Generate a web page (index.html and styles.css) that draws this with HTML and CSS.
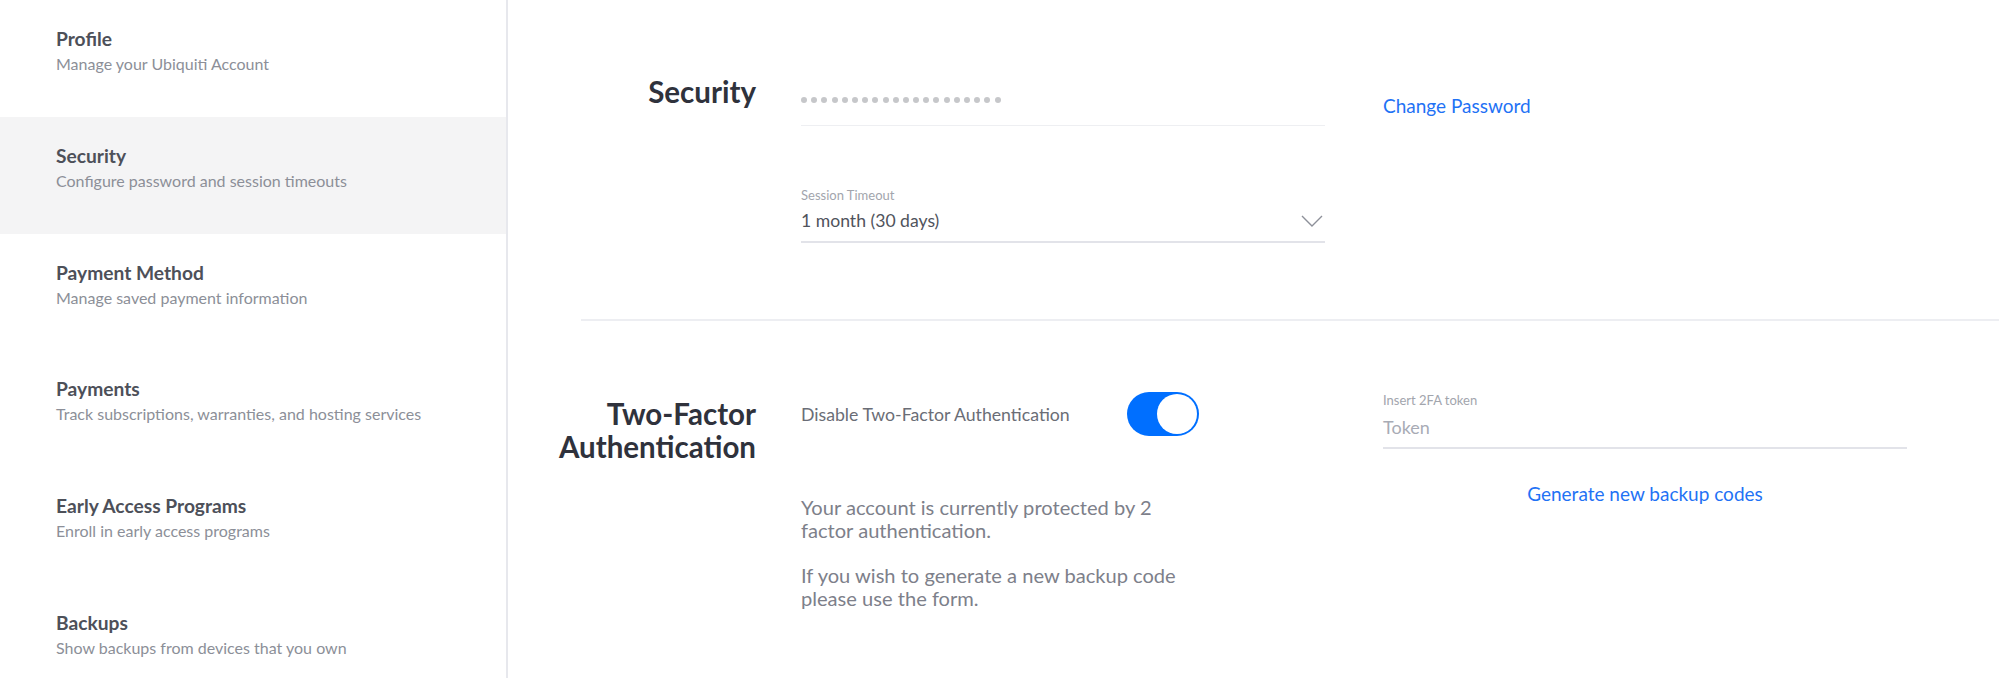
FILE: index.html
```html
<!DOCTYPE html>
<html lang="en">
<head>
<meta charset="utf-8">
<title>Security</title>
<link rel="stylesheet" href="styles.css">
</head>
<body>
<div class="page">
  <nav class="sidebar">
    <a class="nav-item">
      <div class="nav-title">Profile</div>
      <div class="nav-sub">Manage your Ubiquiti Account</div>
    </a>
    <a class="nav-item active">
      <div class="nav-title">Security</div>
      <div class="nav-sub">Configure password and session timeouts</div>
    </a>
    <a class="nav-item">
      <div class="nav-title">Payment Method</div>
      <div class="nav-sub">Manage saved payment information</div>
    </a>
    <a class="nav-item">
      <div class="nav-title">Payments</div>
      <div class="nav-sub">Track subscriptions, warranties, and hosting services</div>
    </a>
    <a class="nav-item">
      <div class="nav-title">Early Access Programs</div>
      <div class="nav-sub">Enroll in early access programs</div>
    </a>
    <a class="nav-item">
      <div class="nav-title">Backups</div>
      <div class="nav-sub">Show backups from devices that you own</div>
    </a>
  </nav>

  <main class="main">
    <section class="section section-security">
      <h2 class="section-title">Security</h2>
      <div class="section-body">
        <div class="password-field">
          <span class="dots">
            <i></i><i></i><i></i><i></i><i></i><i></i><i></i><i></i><i></i><i></i>
            <i></i><i></i><i></i><i></i><i></i><i></i><i></i><i></i><i></i><i></i>
          </span>
        </div>
        <div class="select-field">
          <div class="field-label">Session Timeout</div>
          <div class="select">
            <span class="select-value">1 month (30 days)</span>
            <svg class="chevron" width="22" height="12" viewBox="0 0 22 12"><path d="M1 1 L11 11 L21 1" fill="none" stroke="#8d9099" stroke-width="1.4"/></svg>
          </div>
        </div>
      </div>
      <div class="section-aside">
        <a class="link change-pw">Change Password</a>
      </div>
    </section>

    <div class="divider"></div>

    <section class="section section-tfa">
      <h2 class="section-title tfa-title">Two-Factor Authentication</h2>
      <div class="section-body tfa-body">
        <div class="toggle-row">
          <span class="toggle-label">Disable Two-Factor Authentication</span>
          <span class="toggle"><span class="knob"></span></span>
        </div>
        <p class="info first">Your account is currently protected by 2 factor authentication.</p>
        <p class="info">If you wish to generate a new backup code please use the form.</p>
      </div>
      <div class="section-aside tfa-aside">
        <div class="token-field">
          <div class="field-label">Insert 2FA token</div>
          <div class="token-input">Token</div>
        </div>
        <a class="link generate">Generate new backup codes</a>
      </div>
    </section>
  </main>
</div>
</body>
</html>
```

FILE: styles.css
```css
* { box-sizing: border-box; }

html, body {
  margin: 0;
  padding: 0;
  background: #ffffff;
}

body {
  font-family: Lato, "Open Sans", "Liberation Sans", sans-serif;
  color: #50535c;
  overflow: hidden;
}

.page {
  display: flex;
  min-height: 100vh;
}

/* Sidebar */
.sidebar {
  width: 508px;
  flex-shrink: 0;
  border-right: 2px solid #e7e8ed;
  min-height: 100vh;
  display: flex;
  flex-direction: column;
}

.nav-item {
  display: block;
  height: 116.8px;
  flex-shrink: 0;
  padding: 27px 0 0 56px;
  text-decoration: none;
}

.nav-item.active {
  background: #f4f4f5;
}

.nav-title {
  font-size: 19.2px;
  line-height: 24px;
  font-weight: 700;
  color: #4d5059;
}

.nav-sub {
  margin-top: 2px;
  font-size: 16px;
  line-height: 22px;
  color: #8c8f98;
}

/* Main */
.main {
  flex: 1;
  padding-left: 18px;
  min-width: 0;
}

.section {
  display: flex;
  align-items: flex-start;
}

.section-security {
  padding-top: 75px;
}

.section-title {
  width: 230px;
  margin: 0 45px 0 0;
  text-align: right;
  font-size: 29.5px;
  line-height: 34px;
  font-weight: 700;
  color: #2f323c;
  flex-shrink: 0;
}

.section-body {
  width: 524px;
  flex-shrink: 0;
}

.section-aside {
  width: 524px;
  margin-left: 58px;
  flex-shrink: 0;
}

.password-field {
  height: 51px;
  border-bottom: 1px solid #eeeff2;
  display: flex;
  align-items: center;
}

.dots {
  display: flex;
  gap: 4.2px;
  padding-bottom: 1px;
}

.dots i {
  display: block;
  width: 6px;
  height: 6px;
  border-radius: 50%;
  background: #c6c7ca;
}

.select-field {
  margin-top: 62px;
}

.field-label {
  font-size: 13px;
  line-height: 15px;
  color: #a2a5ad;
}

.select {
  margin-top: 6px;
  display: flex;
  justify-content: space-between;
  align-items: center;
  height: 34px;
  padding-bottom: 8px;
  border-bottom: 2px solid #e2e3e9;
}

.select-value {
  font-size: 17.6px;
  line-height: 24px;
  color: #50535c;
}

.chevron {
  margin-right: 2px;
  display: block;
}

.link {
  display: inline-block;
  font-size: 19px;
  line-height: 24px;
  color: #1f72f5;
  text-decoration: none;
}

.change-pw {
  margin-top: 19px;
}

.divider {
  margin-top: 76px;
  margin-left: 55px;
  height: 2px;
  background: #edeef2;
}

/* Two factor */
.section-tfa {
  margin-top: 71px;
}

.tfa-title {
  margin-top: 5px;
  line-height: 33px;
}

.tfa-body {
  width: 524px;
}

.toggle-row {
  width: 398px;
  display: flex;
  align-items: center;
  justify-content: space-between;
  height: 44px;
}

.toggle-label {
  font-size: 17.7px;
  line-height: 22px;
  color: #6a6d76;
  padding-top: 2px;
}

.toggle {
  width: 72px;
  height: 44px;
  border-radius: 22px;
  background: #006fff;
  display: flex;
  justify-content: flex-end;
  align-items: center;
  padding: 2px;
}

.knob {
  width: 40px;
  height: 40px;
  border-radius: 50%;
  background: #ffffff;
}

.info {
  width: 398px;
  margin: 22px 0 0 0;
  font-size: 20.1px;
  line-height: 23px;
  color: #7d808a;
}

.info.first {
  margin-top: 60px;
}

.tfa-aside {
  display: flex;
  flex-direction: column;
  align-items: center;
}

.token-field {
  width: 100%;
  margin-top: 1px;
}

.token-input {
  margin-top: 7px;
  font-size: 18px;
  line-height: 24px;
  color: #a8abb5;
  padding-bottom: 8px;
  border-bottom: 2px solid #e2e3e9;
}

.generate {
  margin-top: 33px;
}
```
